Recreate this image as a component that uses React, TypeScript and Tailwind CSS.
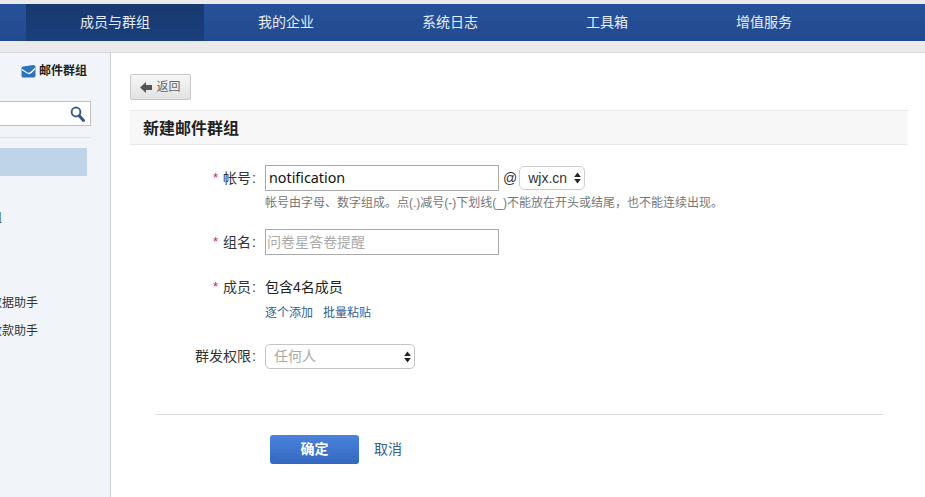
import React from 'react';

const font = { cjk: 'font-["Liberation_Sans","Noto_Sans_CJK_SC",sans-serif]' };

function Updown() {
  return (
    <svg width="7" height="12" viewBox="0 0 7 12" className="shrink-0">
      <path d="M3.5 0.5L6.8 5H0.2z M3.5 11.5L0.2 7H6.8z" fill="#222" />
    </svg>
  );
}

function Label({ text, required = true }: { text: string; required?: boolean }) {
  return (
    <div className="w-[134px] shrink-0 flex justify-end items-center text-[14px] text-[#333] pr-[8px]">
      {required && <span className="text-[#c8283c] mr-[5px] text-[13px]">*</span>}
      <span>{text}</span>
      <span className="ml-[1px]">:</span>
    </div>
  );
}

function TopNav() {
  return (
    <div className="h-[53px] shrink-0 bg-[#eaeaea] border-b border-[#d8d8d8] pt-[4px]">
      <div className="h-[37px] bg-gradient-to-b from-[#265198] to-[#224a90] flex text-[14px] text-[#e8edf5]">
        <div className="w-[26px]" />
        <div className="w-[178px] bg-gradient-to-b from-[#17396f] to-[#1a3f7c] flex items-center justify-center">成员与群组</div>
        <div className="w-[164px] flex items-center justify-center">我的企业</div>
        <div className="w-[164px] flex items-center justify-center">系统日志</div>
        <div className="w-[150px] flex items-center justify-center">工具箱</div>
        <div className="w-[164px] flex items-center justify-center">增值服务</div>
      </div>
    </div>
  );
}

function Sidebar() {
  return (
    <div className="w-[111px] shrink-0 bg-[#f1f5f9] border-r border-[#ccd0d5] overflow-hidden relative">
      <div className="h-[35px] flex items-center justify-end pr-[23px] pt-[1px] text-[12px] font-bold text-[#222]">
        <svg width="15" height="13" viewBox="0 0 15 13" className="mr-[3px]">
          <path d="M2 1.5L12.5 0Q14.5 0 14.5 2V10.5Q14.5 12.5 12.5 12.5H2Q0.5 12.5 0.5 11V3Q0.5 1.8 2 1.5z" fill="#2a74bd" />
          <path d="M1 4.5Q6.5 8.5 8 8.5Q9.5 8.5 14 3.5" stroke="#fff" strokeWidth="1.3" fill="none" />
        </svg>
        邮件群组
      </div>
      <div className="mt-[13px] -ml-[10px] w-[101px] h-[25px] bg-white border border-[#c4c0b8] flex items-center justify-end pr-[5px]">
        <svg width="15" height="16" viewBox="0 0 15 16">
          <circle cx="6" cy="6" r="4.4" stroke="#3f5f8f" strokeWidth="2" fill="none" />
          <path d="M9.5 10L13.5 14.5" stroke="#3a5685" strokeWidth="3" strokeLinecap="round" />
        </svg>
      </div>
      <div className="mt-[11px] w-[91px] h-px bg-[#dcdfe3]" />
      <div className="mt-[10px] w-[87px] h-[28px] bg-[#bfd4e8]" />
      <div className="mt-[33px] text-[12px] text-[#333] -ml-[22px] leading-[18px] whitespace-nowrap">群组</div>
      <div className="mt-[67px] text-[12px] text-[#333] -ml-[10px] leading-[18px] whitespace-nowrap">数据助手</div>
      <div className="mt-[10px] text-[12px] text-[#333] -ml-[10px] leading-[18px] whitespace-nowrap">收款助手</div>
    </div>
  );
}

export default function App() {
  return (
    <div className={`w-[925px] h-[497px] overflow-hidden flex flex-col bg-white ${font.cjk}`}>
      <TopNav />
      <div className="flex-1 flex min-h-0">
        <Sidebar />
        <div className="flex-1 min-w-0 pl-[19px] pr-[17px] pt-[21px]">
          <button className="w-[61px] h-[26px] rounded-[2px] border border-[#c8c8c8] bg-gradient-to-b from-[#f6f6f6] to-[#e2e2e2] flex items-center justify-center gap-[4px] text-[12px] text-[#666]">
            <svg width="12" height="11" viewBox="0 0 12 11">
              <path d="M0 5.5L6 0V3H12V8H6V11z" fill="#555" />
            </svg>
            返回
          </button>
          <div className="mt-[10px] h-[35px] bg-[#f7f7f7] border-t border-b border-[#e8e8e8] flex items-center pl-[13px] pt-[2px] text-[16px] font-bold text-[#222]">
            新建邮件群组
          </div>

          <div className="mt-[20px] flex items-center h-[26px]">
            <Label text="帐号" />
            <div className="ml-[1px] w-[234px] h-[26px] border border-[#a9a9a9] flex items-center pl-[3px] text-[14.3px] text-[#111] font-['Noto_Sans',sans-serif]">
              notification
            </div>
            <span className="ml-[4px] mr-[2px] text-[14px] text-[#333]">@</span>
            <div className="w-[66px] h-[24px] rounded-[5px] border border-[#cfcfcf] flex items-center justify-between pl-[8px] pr-[3px] text-[14px] text-[#333]">
              wjx.cn
              <Updown />
            </div>
          </div>
          <div className="mt-[4px] ml-[135px] text-[12px] leading-[16px] text-[#777] whitespace-nowrap">
            帐号由字母、数字组成。点(.)减号(-)下划线(_)不能放在开头或结尾，也不能连续出现。
          </div>

          <div className="mt-[18px] flex items-center h-[26px]">
            <Label text="组名" />
            <div className="ml-[1px] w-[234px] h-[26px] border border-[#a9a9a9] flex items-center pl-[1px] text-[14px] text-[#aaa]">
              问卷星答卷提醒
            </div>
          </div>

          <div className="mt-[22px] flex items-center h-[20px]">
            <Label text="成员" />
            <span className="ml-[1px] text-[14px] text-[#222]">包含4名成员</span>
          </div>
          <div className="mt-[8px] ml-[135px] flex gap-[10px] text-[12px] leading-[16px] text-[#35608f]">
            <span>逐个添加</span>
            <span>批量粘贴</span>
          </div>

          <div className="mt-[23px] flex items-center h-[25px]">
            <Label text="群发权限" required={false} />
            <div className="ml-[1px] w-[150px] h-[25px] rounded-[5px] border border-[#c4c4c4] flex items-center justify-between pl-[8px] pr-[3px] text-[14px] text-[#aaa]">
              任何人
              <Updown />
            </div>
          </div>

          <div className="mt-[45px] mx-[25px] h-px bg-[#dcdcdc]" />

          <div className="mt-[20px] ml-[140px] flex items-center gap-[15px]">
            <button className="w-[89px] h-[29px] rounded-[3px] bg-gradient-to-b from-[#4a83dc] to-[#3468c0] text-white text-[14px] font-bold">
              确定
            </button>
            <span className="text-[14px] text-[#35608f]">取消</span>
          </div>
        </div>
      </div>
    </div>
  );
}
